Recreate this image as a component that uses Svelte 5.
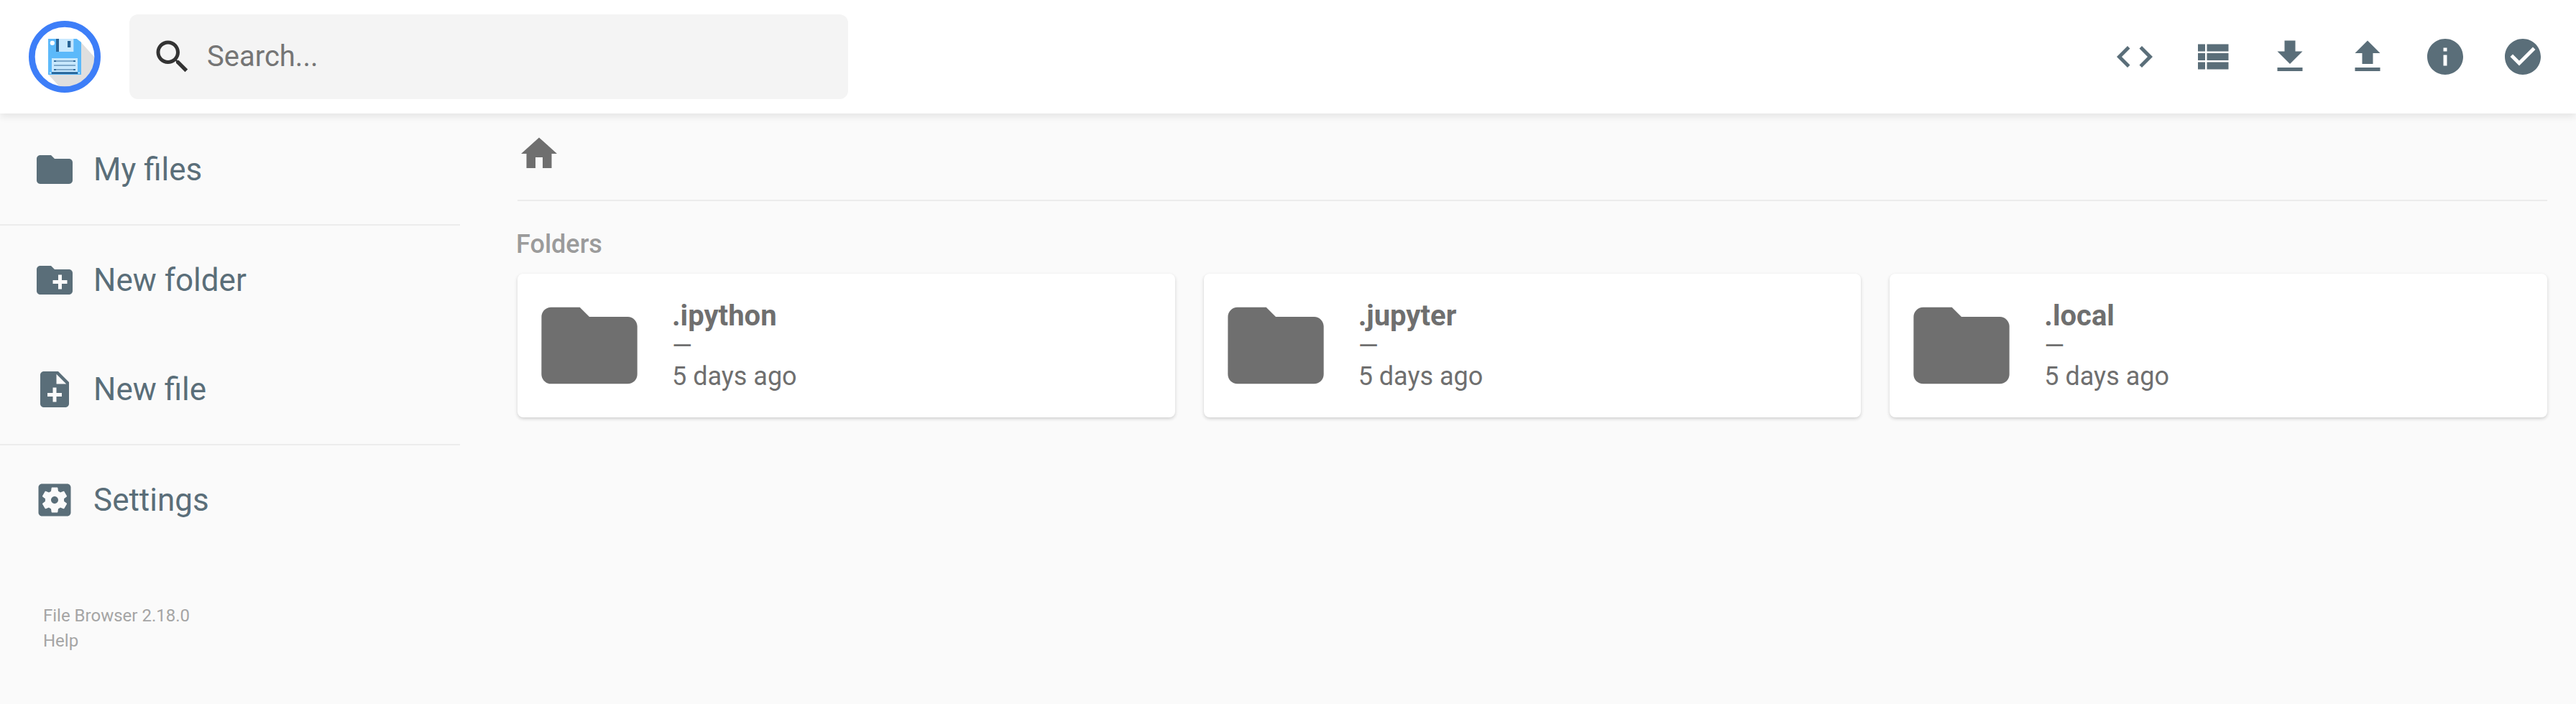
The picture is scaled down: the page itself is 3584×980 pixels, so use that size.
<script>
  const icons = {
    search: 'M15.5 14h-.79l-.28-.27C15.41 12.59 16 11.11 16 9.5 16 5.91 13.09 3 9.5 3S3 5.91 3 9.5 5.91 16 9.5 16c1.61 0 3.09-.59 4.23-1.57l.27.28v.79l5 4.99L20.49 19l-4.99-5zm-6 0C7.01 14 5 11.99 5 9.5S7.01 5 9.5 5 14 7.01 14 9.5 11.99 14 9.5 14z',
    code: 'M9.4 16.6L4.8 12l4.6-4.6L8 6l-6 6 6 6 1.4-1.4zm5.2 0l4.6-4.6-4.6-4.6L16 6l6 6-6 6-1.4-1.4z',
    list: 'M4 14h4v-4H4v4zm0 5h4v-4H4v4zM4 9h4V5H4v4zm5 5h12v-4H9v4zm0 5h12v-4H9v4zM9 5v4h12V5H9z',
    download: 'M19 9h-4V3H9v6H5l7 7 7-7zM5 18v2h14v-2H5z',
    upload: 'M9 16h6v-6h4l-7-7-7 7h4v6zm-4 2h14v2H5v-2z',
    info: 'M12 2C6.48 2 2 6.48 2 12s4.48 10 10 10 10-4.48 10-10S17.52 2 12 2zm1 15h-2v-6h2v6zm0-8h-2V7h2v2z',
    check: 'M12 2C6.48 2 2 6.48 2 12s4.48 10 10 10 10-4.48 10-10S17.52 2 12 2zm-2 15l-5-5 1.41-1.41L10 14.17l7.59-7.59L19 8l-9 9z',
    folder: 'M10 4H4c-1.1 0-1.99.9-1.99 2L2 18c0 1.1.9 2 2 2h16c1.1 0 2-.9 2-2V8c0-1.1-.9-2-2-2h-8l-2-2z',
    newFolder: 'M20 6h-8l-2-2H4c-1.11 0-1.99.89-1.99 2L2 18c0 1.11.89 2 2 2h16c1.11 0 2-.89 2-2V8c0-1.11-.89-2-2-2zm-1 8h-3v3h-2v-3h-3v-2h3V9h2v3h3v2z',
    newFile: 'M14 2H6c-1.1 0-1.99.9-1.99 2L4 20c0 1.1.89 2 1.99 2H18c1.1 0 2-.9 2-2V8l-6-6zm2 14h-3v3h-2v-3H8v-2h3v-3h2v3h3v2zm-3-7V3.5L18.5 9H13z',
    settings: 'M12 10c-1.1 0-2 .9-2 2s.9 2 2 2 2-.9 2-2-.9-2-2-2zm7-7H5c-1.11 0-2 .9-2 2v14c0 1.1.89 2 2 2h14c1.11 0 2-.9 2-2V5c0-1.1-.89-2-2-2zm-1.75 9c0 .23-.02.46-.05.68l1.48 1.16c.13.11.17.3.08.45l-1.4 2.42c-.09.15-.27.21-.43.15l-1.74-.7c-.36.28-.76.51-1.18.69l-.26 1.85c-.03.17-.18.3-.35.3h-2.8c-.17 0-.32-.13-.35-.29l-.26-1.85c-.43-.18-.82-.41-1.18-.69l-1.74.7c-.16.06-.34 0-.43-.15l-1.4-2.42c-.09-.15-.05-.34.08-.45l1.48-1.16c-.03-.23-.05-.46-.05-.69s.02-.46.05-.68l-1.48-1.16c-.13-.11-.17-.3-.08-.45l1.4-2.42c.09-.15.27-.21.43-.15l1.74.7c.36-.28.76-.51 1.18-.69l.26-1.85c.03-.17.18-.3.35-.3h2.8c.17 0 .32.13.35.29l.26 1.85c.43.18.82.41 1.18.69l1.74-.7c.16-.06.34 0 .43.15l1.4 2.42c.09.15.05.34-.08.45l-1.48 1.16c.03.23.05.46.05.69z',
    home: 'M10 20v-6h4v6h5v-8h3L12 3 2 12h3v8z',
  };

  const actions = [
    ['code', 'Toggle shell'],
    ['list', 'Switch view'],
    ['download', 'Download'],
    ['upload', 'Upload'],
    ['info', 'Info'],
    ['check', 'Select multiple'],
  ];

  const groups = [
    [['folder', 'My files']],
    [['newFolder', 'New folder'], ['newFile', 'New file']],
    [['settings', 'Settings']],
  ];

  const folders = ['.ipython', '.jupyter', '.local'];
</script>

{#snippet icon(name)}
  <svg class="icon" viewBox="0 0 24 24" aria-hidden="true"><path d={icons[name]} /></svg>
{/snippet}

<div class="app">
  <header>
    <svg class="logo" viewBox="60 57 300 300" aria-hidden="true">
      <defs><clipPath id="disc"><circle cx="210" cy="207" r="126" /></clipPath></defs>
      <circle cx="210" cy="207" r="137" fill="#fff" />
      <path d="M142 281L278 146L380 260V380H232Z" fill="#dfdfdf" clip-path="url(#disc)" />
      <circle cx="210" cy="207" r="137" fill="none" stroke="#3d7ef8" stroke-width="26" />
      <path d="M141 132H260L279 146V282H141Z" fill="#5cb9fa" />
      <path d="M174 132H247V186H174Z" fill="#c8e8fe" />
      <path d="M174 132H186V186H174ZM222 141H235V168H222Z" fill="#2a6496" />
      <circle cx="158.5" cy="149.5" r="9.5" fill="#fff" />
      <path d="M156 213H264V271H156Z" fill="#c8e8fe" />
      <path d="M165 222H255V228H165ZM165 240H255V246H165ZM165 258H255V264H165Z" fill="#7ea9cb" />
      <path d="M165 223H174V228H165ZM246 223H255V228H246ZM165 259H174V264H165ZM246 259H255V264H246ZM156 271H264V279H156Z" fill="#2a6496" />
      <circle cx="150" cy="274.5" r="3" fill="#e8f6ff" />
      <circle cx="270" cy="274.5" r="3" fill="#e8f6ff" />
    </svg>
    <label class="search">
      {@render icon('search')}
      <input type="text" placeholder="Search..." aria-label="Search" />
    </label>
    <div class="actions">
      {#each actions as [name, label]}
        <button aria-label={label}>{@render icon(name)}</button>
      {/each}
    </div>
  </header>

  <div class="body">
    <nav>
      {#each groups as group}
        <div class="group">
          {#each group as [name, label]}
            <button>{@render icon(name)}<span>{label}</span></button>
          {/each}
        </div>
      {/each}
      <p class="credits"><span>File Browser 2.18.0</span><span>Help</span></p>
    </nav>

    <main>
      <div class="breadcrumbs">{@render icon('home')}</div>
      <h2>Folders</h2>
      <div class="listing">
        {#each folders as name}
          <div class="item">
            {@render icon('folder')}
            <div class="details">
              <p class="name">{name}</p>
              <p class="size">—</p>
              <p class="modified">5 days ago</p>
            </div>
          </div>
        {/each}
      </div>
    </main>
  </div>
</div>

<style>
  :global(body) {
    margin: 0;
    background: #fafafa;
  }

  .app {
    height: 980px;
    overflow: hidden;
    background: #fafafa;
    color: #6f6f6f;
    font-family: Roboto, sans-serif;
    display: flex;
    flex-direction: column;
  }

  .icon {
    display: block;
    flex: none;
    width: 60px;
    height: 60px;
    fill: currentColor;
  }

  button {
    display: flex;
    align-items: center;
    border: 0;
    margin: 0;
    background: none;
    color: #5a6e79;
    font: inherit;
  }

  header {
    position: relative;
    z-index: 1;
    box-sizing: border-box;
    flex: none;
    height: 158px;
    margin-bottom: 2px;
    padding: 0 20px 0 40px;
    display: flex;
    align-items: center;
    background: #fff;
    box-shadow: 0 4px 10px rgba(0, 0, 0, 0.09);
  }

  .logo {
    width: 100px;
    height: 100px;
    margin-right: 40px;
  }

  .search {
    box-sizing: border-box;
    width: 1000px;
    height: 118px;
    padding: 0 30px;
    display: flex;
    align-items: center;
    border-radius: 12px;
    background: #f4f4f4;
    color: #333;
  }

  .search input {
    flex: 1;
    min-width: 0;
    margin-left: 18px;
    padding: 0 0 1px;
    border: 0;
    outline: 0;
    background: none;
    font: 40px Roboto, sans-serif;
  }

  .search input::placeholder {
    color: #757575;
  }

  .actions {
    display: flex;
    margin-left: auto;
  }

  .actions button {
    padding: 24px;
  }

  .body {
    flex: 1;
    display: flex;
  }

  nav {
    width: 640px;
    margin-right: 80px;
  }

  .group + .group {
    border-top: 2px solid #ececec;
  }

  nav button {
    width: 100%;
    height: 152px;
    padding: 0 46px;
    gap: 24px;
    font-size: 44px;
  }

  .credits {
    margin: 68px 0 0 60px;
    display: flex;
    flex-direction: column;
    font-size: 24px;
    line-height: 35px;
    color: #a5a5a5;
  }

  main {
    flex: 1;
    margin-right: 40px;
  }

  .breadcrumbs {
    height: 94px;
    padding-top: 24px;
    border-bottom: 2px solid #ececec;
  }

  h2 {
    margin: 39px 0 0 -2px;
    font-size: 36px;
    line-height: 42px;
    font-weight: 500;
    color: #9b9b9b;
  }

  .listing {
    margin-top: 20px;
    display: grid;
    grid-template-columns: repeat(3, 1fr);
    gap: 40px;
  }

  .item {
    box-sizing: border-box;
    height: 200px;
    padding: 20px;
    display: flex;
    align-items: center;
    gap: 35px;
    border-radius: 8px;
    background: #fff;
    box-shadow: 0 2px 6px rgba(0, 0, 0, 0.06), 0 2px 4px rgba(0, 0, 0, 0.12);
  }

  .item .icon {
    width: 160px;
    height: 160px;
  }

  .details {
    padding-top: 2px;
  }

  .details p {
    margin: 0;
    font-size: 36px;
    line-height: 42px;
  }

  .details .name {
    font-size: 40px;
    font-weight: 700;
  }
</style>
